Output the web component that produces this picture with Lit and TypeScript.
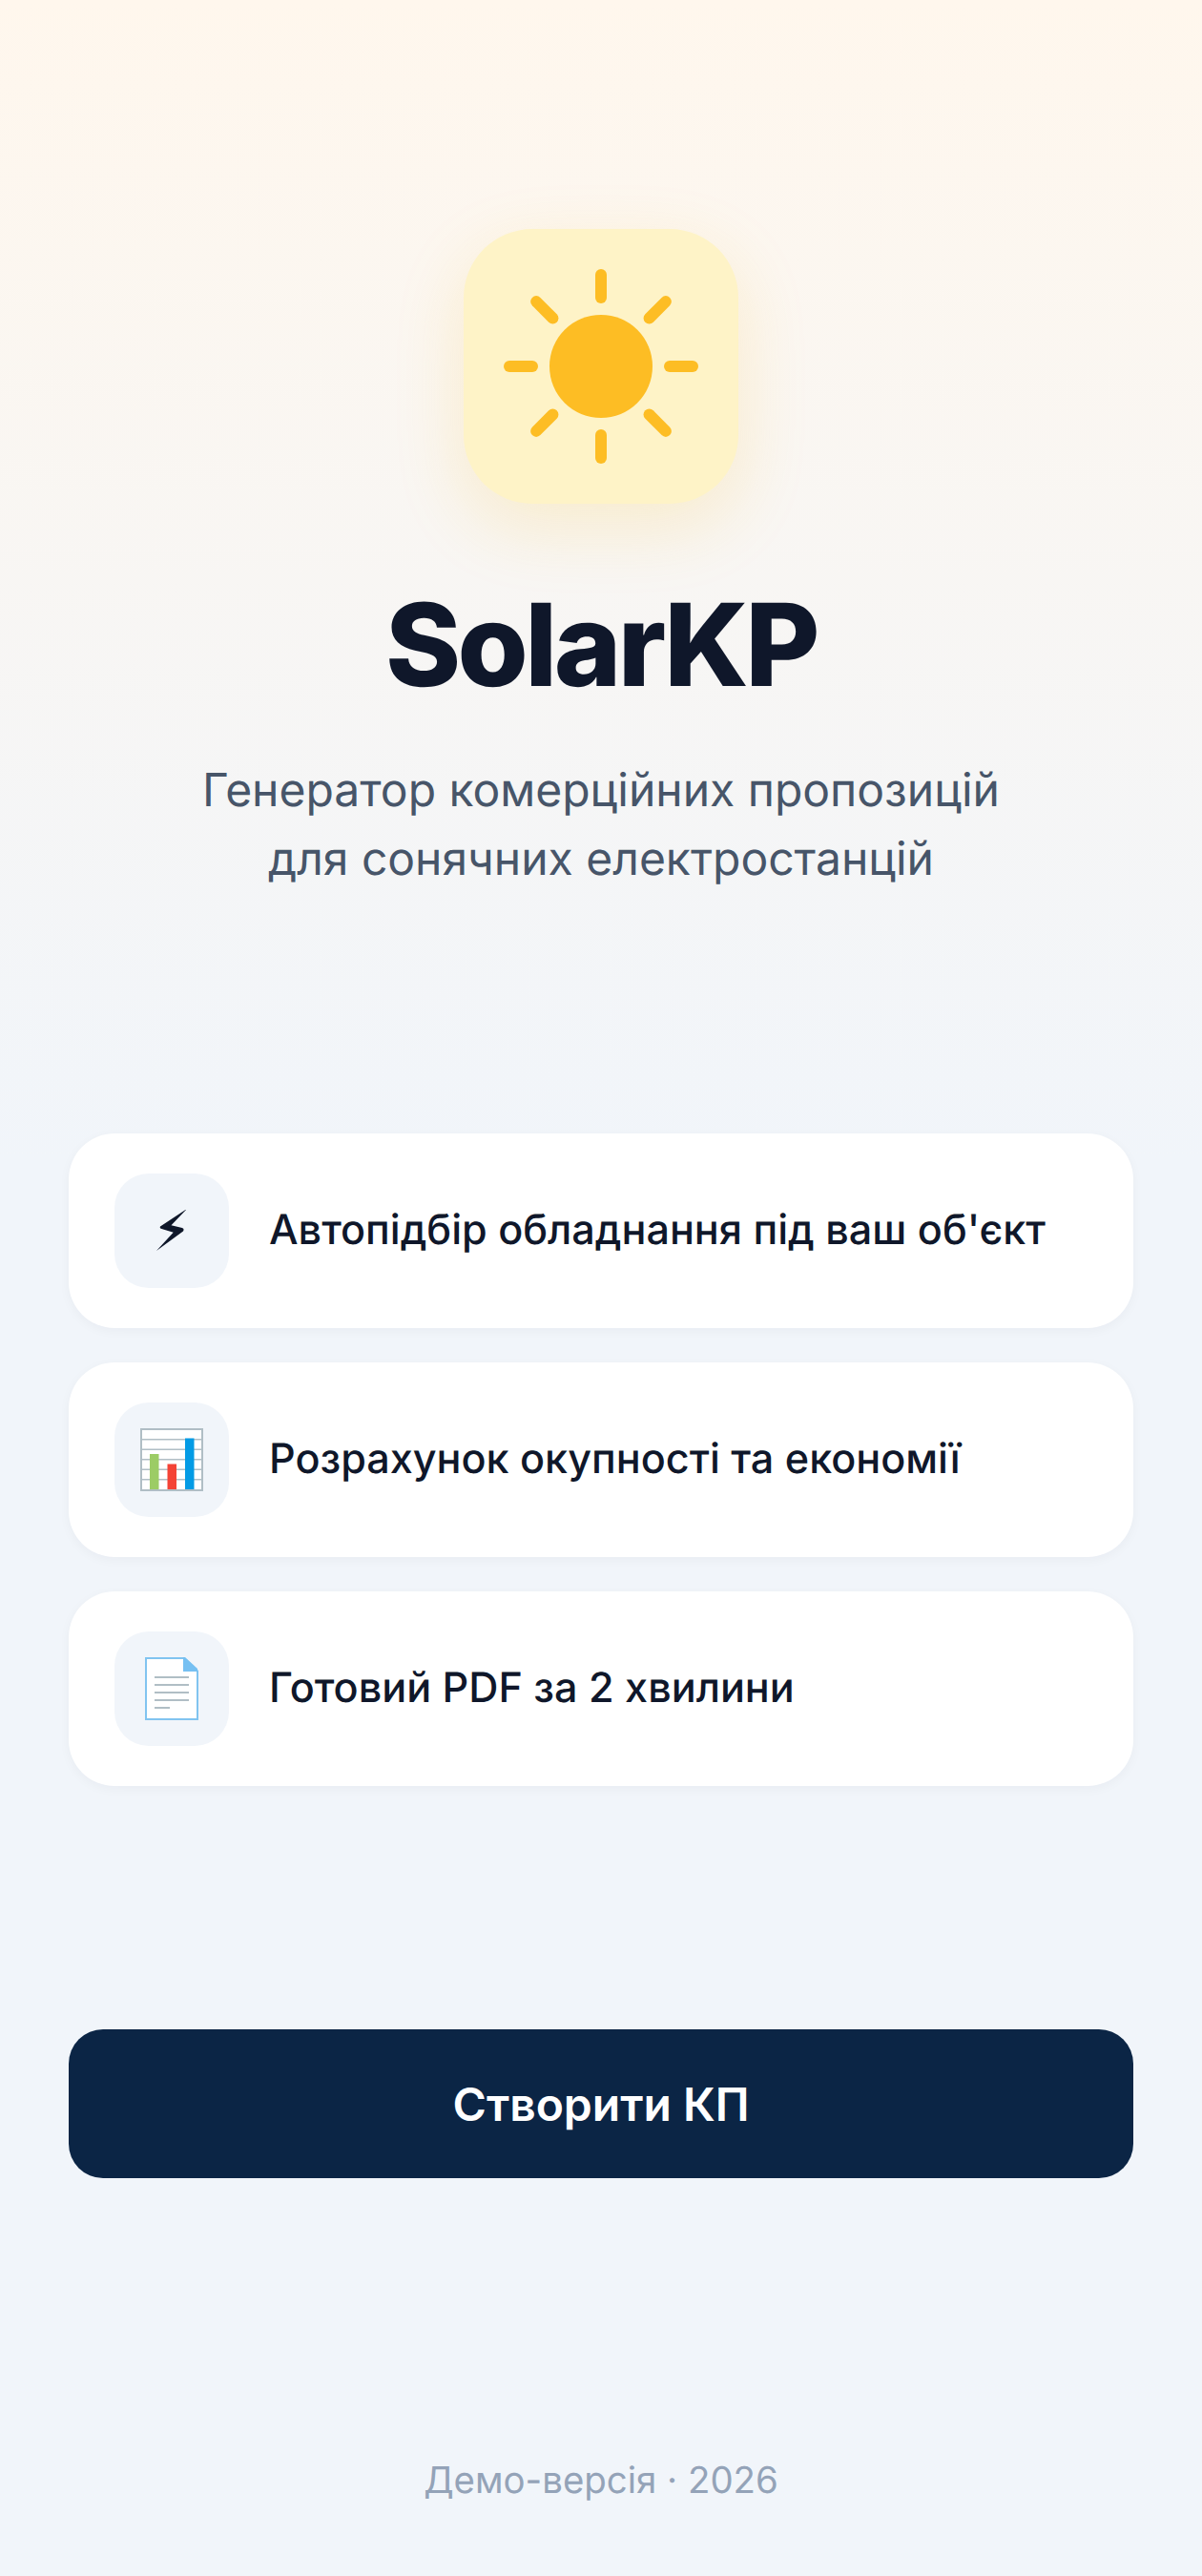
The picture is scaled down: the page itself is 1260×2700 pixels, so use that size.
import { LitElement, html, css, svg } from "lit";
import { customElement } from "lit/decorators.js";

const rays = [0, 45, 90, 135, 180, 225, 270, 315];

@customElement("app-root")
export class AppRoot extends LitElement {
  static styles = css`
    :host {
      display: block;
      font-family: Inter, "Liberation Sans", sans-serif;
      color: #0f172a;
      text-rendering: geometricPrecision;
    }
    .page {
      box-sizing: border-box;
      height: 2700px;
      padding: 240px 72px 0;
      background: linear-gradient(180deg, #fff7ed 0%, #f1f5fa 45%, #f1f5fa 100%);
      display: flex;
      flex-direction: column;
      align-items: stretch;
    }
    .logo {
      align-self: center;
      width: 288px;
      height: 288px;
      border-radius: 72px;
      background: #fef3c7;
      box-shadow: 0 24px 72px rgba(251, 191, 36, 0.18);
      display: flex;
      align-items: center;
      justify-content: center;
    }
    h1 {
      margin: 82px 0 0;
      text-align: center;
      font-size: 120px;
      line-height: 132px;
      font-weight: 800;
      letter-spacing: -3.6px;
      color: #0f172a;
    }
    .sub {
      margin: 50px 0 0;
      text-align: center;
      font-size: 48px;
      line-height: 72px;
      color: #475569;
    }
    .cards {
      margin-top: 252px;
      display: flex;
      flex-direction: column;
      gap: 36px;
    }
    .card {
      height: 204px;
      box-sizing: border-box;
      padding: 0 48px;
      background: #fff;
      border-radius: 48px;
      box-shadow: 0 3px 12px rgba(15, 23, 42, 0.04);
      display: flex;
      align-items: center;
      gap: 42px;
    }
    .ic {
      width: 120px;
      height: 120px;
      flex: none;
      border-radius: 36px;
      background: #f1f5fa;
      display: flex;
      align-items: center;
      justify-content: center;
    }
    .label {
      font-size: 43.15px;
      font-weight: 500;
      color: #0f172a;
      padding-bottom: 2px;
    }
    .cta {
      margin-top: 255px;
      height: 156px;
      border: 0;
      border-radius: 36px;
      background: #0b2545;
      color: #fff;
      font: 600 48px Inter, "Liberation Sans", sans-serif;
    }
    .foot {
      margin-top: 294px;
      text-align: center;
      font-size: 38.4px;
      color: #94a3b8;
    }
  `;

  sun() {
    return html`<svg width="204" height="204" viewBox="-102 -102 204 204">
      <circle r="54" fill="#fdbd24"></circle>
      ${rays.map((a) => {
        const diag = a % 90 !== 0;
        return svg`<line x1="0" y1=${diag ? -71.5 : -72} x2="0" y2="-96" transform="rotate(${a})"
          stroke="#fdbd24" stroke-width="12" stroke-linecap="round"></line>`;
      })}
    </svg>`;
  }

  bolt() {
    return html`<svg width="32" height="44" viewBox="0 1 32 44">
      <path d="M32 0 L4 18.500 Q3 20.500 5.500 21 L17.700 24.700 L0 44 L28 23.500 Q29.500 21 27 20 L15.500 17.300 Z" fill="#0f172a"></path>
    </svg>`;
  }

  chart() {
    return html`<svg width="66" height="66" viewBox="0 0 66 66">
      <rect x="0" y="0" width="66" height="66" fill="#b0bec5"></rect>
      <rect x="2" y="2" width="62" height="62" fill="#fff"></rect>
      ${[11, 21.5, 32, 42.5, 53].map(
        (y) => svg`<rect x="2" y=${y} width="62" height="1.5" fill="#b0bec5"></rect>`
      )}
      <rect x="10" y="27" width="9.5" height="37" fill="#9ccc65"></rect>
      <rect x="28.5" y="37.5" width="9.5" height="26.5" fill="#f44336"></rect>
      <rect x="47" y="10.5" width="9.5" height="53.5" fill="#039be5"></rect>
    </svg>`;
  }

  doc() {
    return html`<svg width="56" height="66" viewBox="0 0 56 66">
      <path d="M1 1 H41 L55 14.500 V65 H1 Z" fill="#fff" stroke="#81c4f0" stroke-width="2"></path>
      <path d="M40 0 H42 L55 12 V15 H40 Z" fill="#76c0f2"></path>
      ${[20, 28, 36, 44].map(
        (y) => svg`<rect x="10" y=${y} width="36" height="2" fill="#b0bec5"></rect>`
      )}
      <rect x="10" y="52" width="16" height="2" fill="#b0bec5"></rect>
    </svg>`;
  }

  render() {
    const items: [unknown, string][] = [
      [this.bolt(), "Автопідбір обладнання під ваш об'єкт"],
      [this.chart(), "Розрахунок окупності та економії"],
      [this.doc(), "Готовий PDF за 2 хвилини"],
    ];
    return html`<div class="page">
      <div class="logo">${this.sun()}</div>
      <h1>SolarKP</h1>
      <p class="sub">Генератор комерційних пропозицій<br />для сонячних електростанцій</p>
      <div class="cards">
        ${items.map(
          ([icon, text]) => html`<div class="card">
            <div class="ic">${icon}</div>
            <div class="label">${text}</div>
          </div>`
        )}
      </div>
      <button class="cta">Створити КП</button>
      <div class="foot">Демо-версія · 2026</div>
    </div>`;
  }
}
